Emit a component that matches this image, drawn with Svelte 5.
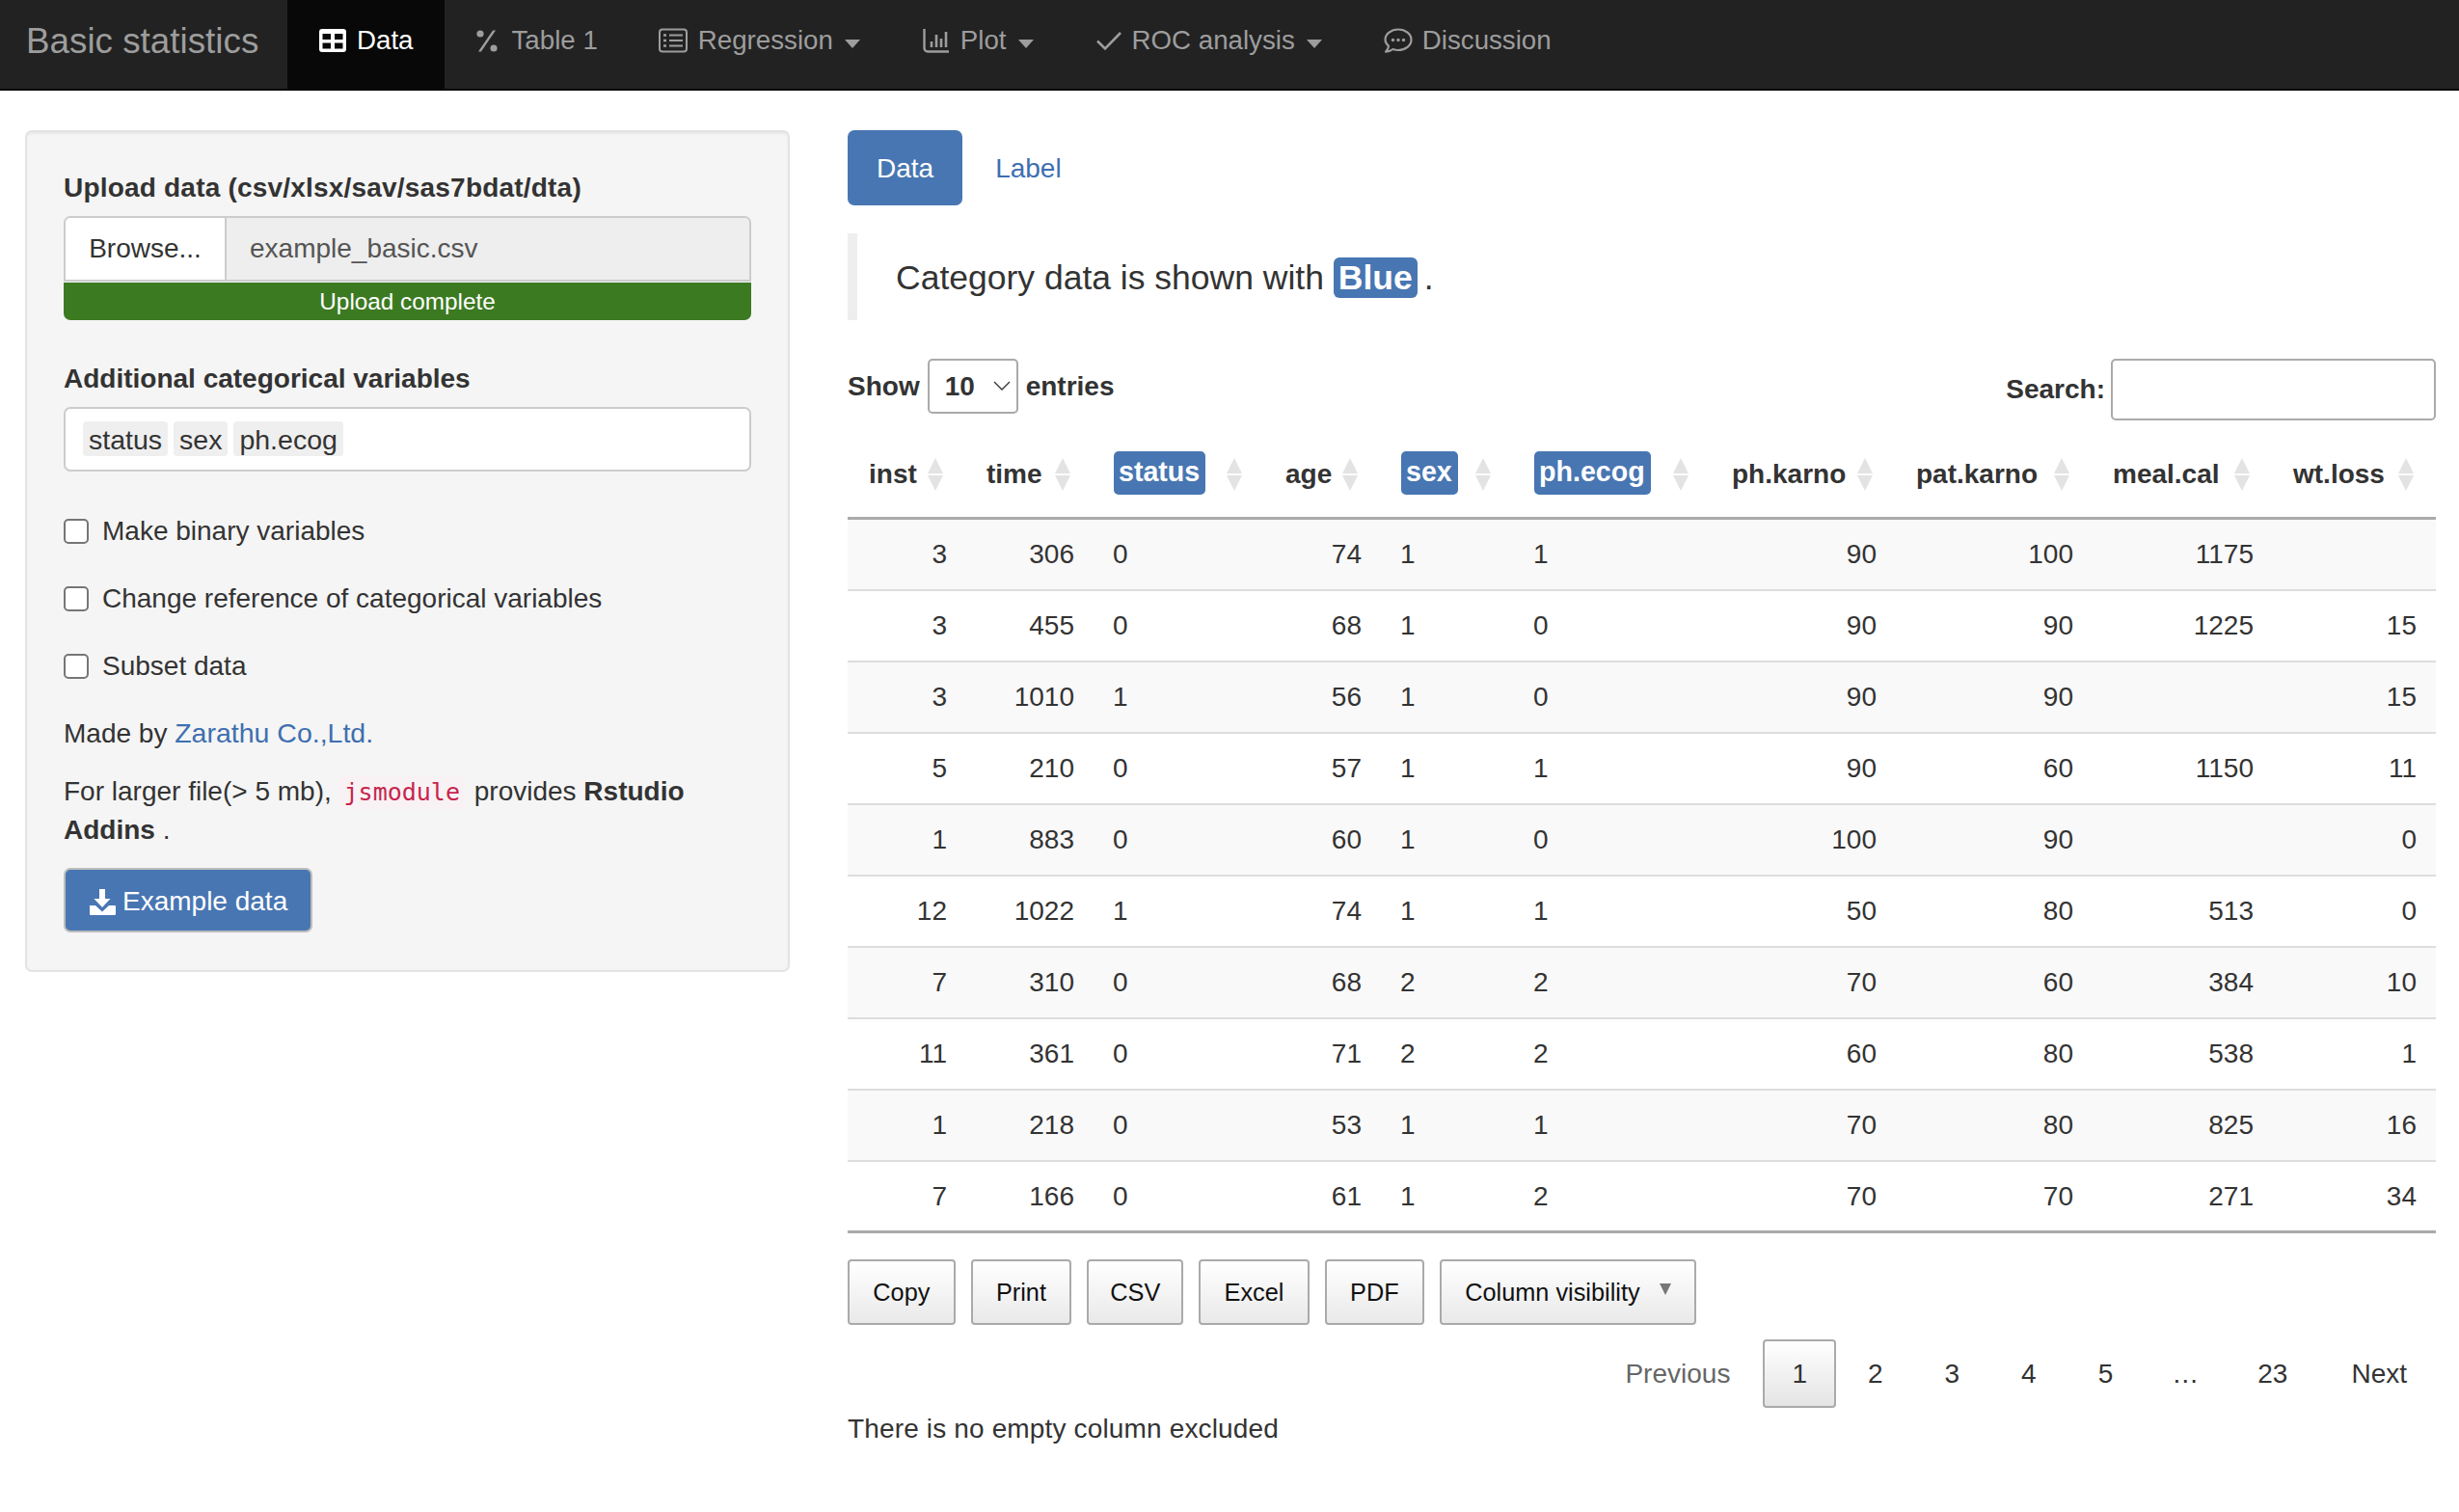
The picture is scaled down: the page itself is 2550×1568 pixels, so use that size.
<script>
	const columns = [
		{ name: 'inst', align: 'r' },
		{ name: 'time', align: 'r' },
		{ name: 'status', align: 'l', cat: true },
		{ name: 'age', align: 'r' },
		{ name: 'sex', align: 'l', cat: true },
		{ name: 'ph.ecog', align: 'l', cat: true },
		{ name: 'ph.karno', align: 'r' },
		{ name: 'pat.karno', align: 'r' },
		{ name: 'meal.cal', align: 'r' },
		{ name: 'wt.loss', align: 'r' }
	];

	const rows = [
		[3, 306, 0, 74, 1, 1, 90, 100, 1175, ''],
		[3, 455, 0, 68, 1, 0, 90, 90, 1225, 15],
		[3, 1010, 1, 56, 1, 0, 90, 90, '', 15],
		[5, 210, 0, 57, 1, 1, 90, 60, 1150, 11],
		[1, 883, 0, 60, 1, 0, 100, 90, '', 0],
		[12, 1022, 1, 74, 1, 1, 50, 80, 513, 0],
		[7, 310, 0, 68, 2, 2, 70, 60, 384, 10],
		[11, 361, 0, 71, 2, 2, 60, 80, 538, 1],
		[1, 218, 0, 53, 1, 1, 70, 80, 825, 16],
		[7, 166, 0, 61, 1, 2, 70, 70, 271, 34]
	];

	const chips = ['status', 'sex', 'ph.ecog'];
	const checks = ['Make binary variables', 'Change reference of categorical variables', 'Subset data'];
	const exportButtons = ['Copy', 'Print', 'CSV', 'Excel', 'PDF'];
	const pages = ['2', '3', '4', '5'];
</script>

<nav class="navbar">
	<span class="brand">Basic statistics</span>
	<a class="tab active">
		<svg class="ico" viewBox="0 0 30 30" width="30" height="30"><path fill="#fff" fill-rule="evenodd" d="M4 3h22a3 3 0 0 1 3 3v18a3 3 0 0 1-3 3H4a3 3 0 0 1-3-3V6a3 3 0 0 1 3-3zM4.500 8v6h8.500V8zm12.500 0v6h8.500V8zM4.500 17.500v6h8.500v-6zm12.500 0v6h8.500v-6z"/></svg>
		Data
	</a>
	<a class="tab pct">
		<svg class="ico" viewBox="0 0 24 30" width="24" height="30"><g fill="#9d9d9d"><circle cx="5" cy="8" r="3.600"/><circle cx="19" cy="23" r="3.600"/><path d="M18 4.500h3L6 26.500H3z"/></g></svg>
		Table 1
	</a>
	<a class="tab">
		<svg class="ico" viewBox="0 0 32 30" width="32" height="30"><g fill="none" stroke="#9d9d9d" stroke-width="2"><rect x="2" y="3.500" width="28" height="23" rx="3"/><path d="M12 9.500h14M12 15h14M12 20.500h14"/><path d="M6 9.500h3M6 15h3M6 20.500h3" stroke-width="2.500"/></g></svg>
		Regression <i class="caret"></i>
	</a>
	<a class="tab">
		<svg class="ico" viewBox="0 0 30 30" width="30" height="30"><g fill="none" stroke="#9d9d9d"><path d="M2.500 3v20a3.500 3.500 0 0 0 3.500 3.500h22" stroke-width="2.400"/><path d="M10 16v6M15 9v13M20 13v9M25 6v16" stroke-width="2.600"/></g></svg>
		Plot <i class="caret"></i>
	</a>
	<a class="tab">
		<svg class="ico" viewBox="0 0 28 30" width="28" height="30"><path fill="none" stroke="#9d9d9d" stroke-width="2.600" d="M2 15.500l8 8L26 7"/></svg>
		ROC analysis <i class="caret"></i>
	</a>
	<a class="tab">
		<svg class="ico" viewBox="0 0 30 30" width="30" height="30"><path fill="none" stroke="#9d9d9d" stroke-width="2.200" stroke-linejoin="round" d="M15 3.500c7.500 0 13.500 4.800 13.500 10.800S22.500 25 15 25c-2 0-3.800-.3-5.500-1-1.800 1.400-4.300 2.700-7.500 2.700 1.700-1.700 2.800-3.800 3-5.900-2.200-1.900-3.500-4-3.500-6.500C1.500 8.300 7.500 3.500 15 3.500z"/><g fill="#9d9d9d"><circle cx="9.500" cy="14.500" r="1.700"/><circle cx="15" cy="14.500" r="1.700"/><circle cx="20.500" cy="14.500" r="1.700"/></g></svg>
		Discussion
	</a>
</nav>

<div class="page">
	<aside class="well">
		<label class="lbl first">Upload data (csv/xlsx/sav/sas7bdat/dta)</label>
		<div class="file">
			<span class="browse">Browse...</span>
			<span class="fname">example_basic.csv</span>
		</div>
		<div class="progress">Upload complete</div>

		<label class="lbl second">Additional categorical variables</label>
		<div class="selectize">
			{#each chips as c}
				<span class="chip">{c}</span>
			{/each}
		</div>

		<div class="checks">
			{#each checks as c}
				<label class="check"><input type="checkbox" />{c}</label>
			{/each}
		</div>

		<p class="made">Made by <a href="#z">Zarathu Co.,Ltd.</a></p>
		<p class="larger">For larger file(&gt; 5 mb), <code>jsmodule</code> provides <b>Rstudio Addins</b> .</p>
		<button class="example">
			<svg viewBox="0 0 28 28" width="28" height="28"><path fill="#fff" d="M11 1h6v10h5.500L14 20 5.500 11H11z"/><path fill="#fff" d="M1 18h6l7 6.500L21 18h6a1 1 0 0 1 1 1v8a1 1 0 0 1-1 1H2a1 1 0 0 1-1-1v-8a1 1 0 0 1 0-1z"/></svg>
			Example data
		</button>
	</aside>

	<main class="content">
		<div class="pills">
			<a class="pill on">Data</a>
			<a class="pill">Label</a>
		</div>

		<blockquote>Category data is shown with <span class="blue">Blue</span> .</blockquote>

		<div class="controls">
			<div class="show">
				Show
				<span class="sel">
					<select><option>10</option></select>
					<svg viewBox="0 0 18 10" width="18" height="10"><path fill="none" stroke="#333" stroke-width="1.300" d="M1 1l8 8 8-8"/></svg>
				</span>
				entries
			</div>
			<div class="search">Search:<input type="text" /></div>
		</div>

		<table>
			<colgroup>
				{#each columns as _}<col />{/each}
			</colgroup>
			<thead>
				<tr>
					{#each columns as col}
						<th>
							<div class="thin">
								{#if col.cat}
									<span class="badge">{col.name}</span>
								{:else}
									<span>{col.name}</span>
								{/if}
								<svg class="sort" viewBox="0 0 16 34" width="16" height="34"><path fill="#e3e3e3" d="M8 0l8 16H0zM0 18h16L8 34z"/></svg>
							</div>
						</th>
					{/each}
				</tr>
			</thead>
			<tbody>
				{#each rows as row}
					<tr>
						{#each row as v, i}
							<td class={columns[i].align}>{v}</td>
						{/each}
					</tr>
				{/each}
			</tbody>
		</table>

		<div class="buttons">
			{#each exportButtons as b}
				<button class="dt">{b}</button>
			{/each}
			<button class="dt vis">Column visibility<i class="arrow"></i></button>
		</div>

		<div class="pager">
			<span class="pg prev">Previous</span>
			<span class="pg cur">1</span>
			{#each pages as p}
				<span class="pg">{p}</span>
			{/each}
			<span class="pg dots">…</span>
			<span class="pg">23</span>
			<span class="pg next">Next</span>
		</div>

		<p class="note">There is no empty column excluded</p>
	</main>
</div>

<style>
	:global(body) {
		margin: 0;
		background: #fff;
		color: #333;
		font-family: "Liberation Sans", Arial, sans-serif;
		font-size: 28px;
	}
	.navbar {
		display: flex;
		align-items: stretch;
		height: 92px;
		background: #222;
		border-bottom: 2px solid #080808;
	}
	.brand {
		width: 271px;
		padding-left: 27px;
		line-height: 86px;
		font-size: 36.800px;
		color: #9d9d9d;
	}
	.tab {
		display: flex;
		align-items: center;
		padding: 0 32px 8px;
		color: #9d9d9d;
		font-size: 27.700px;
		white-space: nowrap;
	}
	.tab.active {
		background: #080808;
		color: #fff;
	}
	.tab.pct {
		padding-right: 30px;
	}
	.tab.pct .ico {
		margin-right: 14px;
	}
	.ico {
		margin-right: 10px;
	}
	.caret {
		display: inline-block;
		margin-left: 12px;
		margin-top: 6px;
		border-left: 8px solid transparent;
		border-right: 8px solid transparent;
		border-top: 9px solid #9d9d9d;
	}
	.page {
		display: grid;
		grid-template-columns: 793px 1647px;
		gap: 60px;
		padding: 41px 0 0 26px;
		align-items: start;
	}
	.well {
		box-sizing: border-box;
		height: 873px;
		padding: 38px 40px;
		background: #f5f5f5;
		border: 2px solid #e3e3e3;
		border-radius: 7px;
		box-shadow: inset 0 2px 2px rgba(0, 0, 0, 0.05);
	}
	.lbl {
		display: block;
		font-weight: 700;
		line-height: 40px;
		margin-left: -2px;
	}
	.lbl.first {
		letter-spacing: 0.2px;
	}
	.file {
		display: flex;
		box-sizing: border-box;
		height: 68px;
		margin: 9px -2px 0;
		border: 2px solid #ccc;
		border-radius: 7px 7px 0 0;
		overflow: hidden;
		box-shadow: inset 0 2px 2px rgba(0, 0, 0, 0.08);
	}
	.browse {
		width: 165px;
		background: #fff;
		text-align: center;
		line-height: 64px;
		border-right: 2px solid #ccc;
	}
	.fname {
		flex: 1;
		background: #eee;
		padding-left: 24px;
		line-height: 64px;
		color: #555;
	}
	.progress {
		height: 39px;
		margin: 1px -2px 0;
		background: #3c7a22;
		border-radius: 0 0 7px 7px;
		color: #fff;
		text-align: center;
		font-size: 24.300px;
		line-height: 39px;
	}
	.second {
		margin-top: 41px;
	}
	.selectize {
		display: flex;
		gap: 6px;
		box-sizing: border-box;
		height: 67px;
		margin: 9px -2px 0;
		padding: 13px 18px;
		background: #fff;
		border: 2px solid #ccc;
		border-radius: 7px;
	}
	.chip {
		height: 36px;
		padding: 0 6px;
		background: #efefef;
		border-radius: 4px;
		font-size: 28.500px;
		line-height: 38px;
	}
	.checks {
		margin: 27px 0 0 -2px;
	}
	.check {
		display: flex;
		align-items: center;
		height: 70px;
	}
	.check input {
		appearance: none;
		box-sizing: border-box;
		width: 26px;
		height: 26px;
		margin: 0 14px 0 0;
		background: #fff;
		border: 2px solid #767676;
		border-radius: 5px;
	}
	.made {
		margin: 14px 0 0 -2px;
		line-height: 40px;
	}
	.made a {
		color: #3e6fb0;
		font-size: 28.500px;
		text-decoration: none;
	}
	.larger {
		margin: 20px 0 0 -2px;
		line-height: 39px;
	}
	code {
		margin: 0 1px 0 -1px;
		padding: 3px 6px;
		background: #f9f2f4;
		border-radius: 4px;
		color: #c7254e;
		font-family: "DejaVu Sans Mono", monospace;
		font-size: 25px;
	}
	.example {
		display: flex;
		align-items: center;
		gap: 7px;
		box-sizing: border-box;
		width: 258px;
		height: 67px;
		margin: 20px 0 0 -2px;
		padding: 2px 0 0 24px;
		background: #4876b2;
		border: 2px solid #bdbdbd;
		border-radius: 7px;
		color: #fff;
		font: inherit;
	}
	.pills {
		display: flex;
		gap: 4px;
	}
	.pill {
		height: 78px;
		padding: 0 30px;
		border-radius: 7px;
		color: #3e6fb0;
		line-height: 80px;
	}
	.pill.on {
		background: #4876b2;
		color: #fff;
	}
	blockquote {
		box-sizing: border-box;
		height: 90px;
		margin: 29px 0 0;
		padding-left: 40px;
		border-left: 10px solid #eee;
		font-size: 35.500px;
		line-height: 92px;
	}
	.blue {
		margin-right: -3px;
		padding: 1px 5px;
		background: #4876b2;
		border-radius: 6px;
		color: #fff;
		font-weight: 700;
	}
	.controls {
		display: flex;
		justify-content: space-between;
		align-items: flex-start;
		height: 63px;
		margin-top: 40px;
		font-weight: 700;
	}
	.show {
		display: flex;
		align-items: center;
		gap: 8px;
		height: 57px;
	}
	.sel {
		position: relative;
		display: block;
		height: 57px;
	}
	.sel select {
		appearance: none;
		box-sizing: border-box;
		width: 94px;
		height: 57px;
		padding: 0 0 0 16px;
		background: #fff;
		border: 2px solid #aaa;
		border-radius: 5px;
		color: #333;
		font: 700 28px "Liberation Sans", Arial, sans-serif;
	}
	.sel svg {
		position: absolute;
		right: 8px;
		top: 23px;
	}
	.search {
		display: flex;
		align-items: center;
		gap: 6px;
		height: 63px;
	}
	.search input {
		box-sizing: border-box;
		width: 337px;
		height: 64px;
		background: #fff;
		border: 2px solid #aaa;
		border-radius: 5px;
	}
	table {
		width: 1647px;
		table-layout: fixed;
		border-collapse: separate;
		border-spacing: 0;
	}
	col:nth-child(1) { width: 122px; }
	col:nth-child(2) { width: 132px; }
	col:nth-child(3) { width: 178px; }
	col:nth-child(4) { width: 120px; }
	col:nth-child(5) { width: 138px; }
	col:nth-child(6) { width: 205px; }
	col:nth-child(7) { width: 191px; }
	col:nth-child(8) { width: 204px; }
	col:nth-child(9) { width: 187px; }
	col:nth-child(10) { width: 170px; }
	th {
		box-sizing: border-box;
		height: 104px;
		padding: 0;
		border-bottom: 3px solid #aaa;
		text-align: left;
	}
	.thin {
		display: flex;
		align-items: center;
		justify-content: space-between;
		padding: 12px 23px 0 22px;
	}
	.badge {
		margin-top: -3px;
		padding: 5px 6px 7px 5px;
		background: #4876b2;
		border-radius: 5px;
		color: #fff;
		font-size: 28.600px;
	}
	td {
		box-sizing: border-box;
		height: 74px;
		padding: 0 19px 0 21px;
		border-bottom: 2px solid #ddd;
	}
	td:last-child {
		padding-right: 20px;
	}
	tbody tr:nth-child(odd) {
		background: #f9f9f9;
	}
	tbody tr:last-child td {
		border-bottom: 3px solid #aaa;
	}
	td.r {
		text-align: right;
	}
	td.l {
		text-align: left;
	}
	.buttons {
		display: flex;
		gap: 16px;
		margin-top: 27px;
	}
	.dt {
		box-sizing: border-box;
		height: 68px;
		padding: 0 24.300px;
		background: linear-gradient(#fff, #e9e9e9);
		border: 2px solid #aaa;
		border-radius: 4px;
		color: #111;
		font: 25.300px "Liberation Sans", Arial, sans-serif;
		white-space: nowrap;
	}
	.dt:nth-child(3) {
		padding: 0 22px;
	}
	.dt.vis {
		display: flex;
		align-items: center;
		padding-right: 24px;
	}
	.arrow {
		display: block;
		margin: -6px 0 0 20px;
		border-left: 6px solid transparent;
		border-right: 6px solid transparent;
		border-top: 12px solid #777;
	}
	.pager {
		display: flex;
		justify-content: flex-end;
		margin-top: 15px;
	}
	.pg {
		box-sizing: border-box;
		height: 71px;
		padding: 0 30px;
		border: 2px solid transparent;
		line-height: 67px;
		color: #333;
	}
	.pg.prev {
		color: #666;
		padding-right: 32px;
	}
	.pg.cur {
		background: linear-gradient(#fff, #e4e4e4);
		border-color: #aaa;
		border-radius: 4px;
		padding: 0 28px;
		margin-right: 1px;
	}
	.pg.dots {
		padding: 0 27px;
	}
	.pg.next {
		padding: 0 28px 0 32px;
	}
	.note {
		margin: 2px 0 0;
		line-height: 40px;
		letter-spacing: 0.150px;
	}
</style>
